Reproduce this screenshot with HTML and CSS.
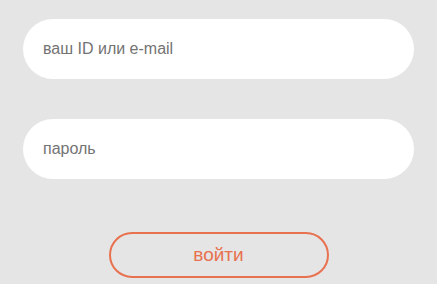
FILE: index.html
```html
<!DOCTYPE html>
<html lang="ru">
  <head>
    <meta charset="utf-8">
    <title>Вход</title>
    <link rel="stylesheet" href="styles.css">
  </head>
  <body>
    <main class="login">
      <form class="loginForm">
        <input type="text" class="field" placeholder="ваш ID или e-mail">
        <input type="password" class="field" placeholder="пароль">
        <div class="btnDiv">
          <button type="submit" class="loginBtn">войти</button>
        </div>
      </form>
    </main>
  </body>
</html>
```

FILE: styles.css
```css
html {
  font-family: "Liberation Sans", Arial, sans-serif;
}

body {
  margin: 0;
  background-color: #e5e5e5;
}

.login {
  padding: 19px 23px 0 23px;
}

.loginForm {
  display: flex;
  flex-direction: column;
  gap: 40px;
}

.field {
  box-sizing: border-box;
  width: 100%;
  height: 60px;
  border: none;
  border-radius: 30px;
  background-color: #fff;
  padding: 0 20px;
  font-family: inherit;
  font-size: 16px;
  color: #555;
  outline: none;
}

.field::placeholder {
  color: #737373;
}

.btnDiv {
  display: flex;
  justify-content: center;
  padding-top: 13px;
}

.loginBtn {
  box-sizing: border-box;
  width: 220px;
  height: 46px;
  border: 2px solid #e8714f;
  border-radius: 23px;
  background: transparent;
  color: #e8714f;
  font-family: inherit;
  font-size: 19px;
  cursor: pointer;
}
```
